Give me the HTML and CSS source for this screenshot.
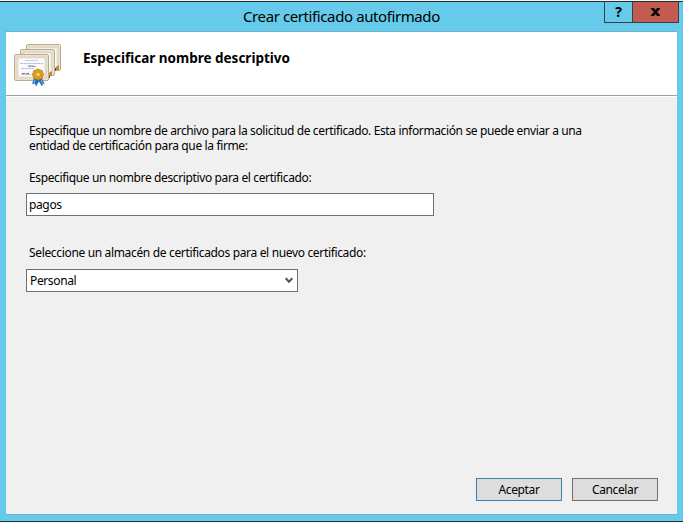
FILE: index.html
```html
<!DOCTYPE html>
<html lang="es">
<head>
<meta charset="utf-8">
<title>Crear certificado autofirmado</title>
<link rel="stylesheet" href="styles.css">
</head>
<body>
<div class="window">
  <header class="titlebar">
    <h1 class="title">Crear certificado autofirmado</h1>
    <div class="controls">
      <button class="control help" aria-label="Ayuda">?</button>
      <button class="control close" aria-label="Cerrar"><svg width="9" height="8" viewBox="0 0 9 8"><path d="M0 0h3l1.500 2L6 0h3v1L6 4l3 3v1H6L4.500 6 3 8H0V7l3-3-3-3z" fill="#080808"/></svg></button>
    </div>
  </header>
  <main class="client">
    <div class="banner">
      <svg class="certs" width="50" height="45" viewBox="0 0 50 45">
        <defs>
          <g id="cert">
            <rect x=".5" y=".5" width="34" height="26" rx="1.500" fill="#e5dac4" stroke="#b8ab94"/>
            <rect x="1.500" y="1.500" width="32" height="24" fill="none" stroke="#eee5d1" stroke-dasharray="2 1"/>
            <rect x="4" y="4" width="27" height="19" fill="#fafafc" stroke="#ded4c2" stroke-width=".7"/>
          </g>
        </defs>
        <use href="#cert" x="12" y="1"/>
        <path d="M42 24l3-2v5h-3z" fill="#c38c20"/><path d="M40 25h2v3h-2z" fill="#22599b"/>
        <use href="#cert" x="6" y="6"/>
        <path d="M35 30l3-2v5h-3z" fill="#c38c20"/><path d="M34 33h2v2h-2z" fill="#22599b"/>
        <use href="#cert" x="0" y="11"/>
        <path d="M11 17.500h13" stroke="#c8cde3"/>
        <path d="M6 20.500h23M14 22.500h7M7 25.500h13" stroke="#b9bfdd" stroke-dasharray="3 .5"/>
        <path d="M14 23.500h8" stroke="#9ba4d1"/>
        <path d="M8 30.500h8" stroke="#77777b" stroke-dasharray="3 1"/>
        <path d="M7 31.500h10" stroke="#c3c3c8"/>
        <path d="M20 35l-2 6 3-.5 1 3 3-5 3 5 1-3 2 1-3-6z" fill="#246fb9"/>
        <path d="M21 37l-1 3M27 37l2 4" stroke="#72b8ef"/>
        <path d="M24 26l2.200 1 2 .5.500 2 1.100 2-1.100 2-.5 2-2 .5-2.200 1-2.200-1-2-.5-.5-2-1.100-2 1.100-2 .5-2 2-.5z" fill="#dda01d" stroke="#b77c12" stroke-width=".8"/>
        <circle cx="24" cy="31.500" r="2.500" fill="#f3d067" stroke="#bd8416" stroke-width=".8"/>
      </svg>
      <h2 class="heading">Especificar nombre descriptivo</h2>
    </div>
    <form class="form">
      <p class="text">Especifique un nombre de archivo para la solicitud de certificado. Esta información se puede enviar a una</p>
      <p class="text">entidad de certificación para que la firme:</p>
      <p class="text name-label">Especifique un nombre descriptivo para el certificado:</p>
      <div class="field name-field">pagos</div>
      <p class="text store-label">Seleccione un almacén de certificados para el nuevo certificado:</p>
      <div class="field select"><span>Personal</span><svg width="8" height="7" viewBox="0 0 8 7"><path d="M.7 1.200L4 4.700l3.300-3.500" fill="none" stroke="#555" stroke-width="2"/></svg></div>
    </form>
    <footer class="actions">
      <button class="button primary">Aceptar</button>
      <button class="button">Cancelar</button>
    </footer>
  </main>
</div>
</body>
</html>
```
FILE: styles.css
```css
* { box-sizing: border-box; }
body { margin: 0; background: #edf5f7; font: 12px/15px "Noto Sans", sans-serif; letter-spacing: -.37px; color: #000; overflow: hidden; }
h1, h2, p { margin: 0; font-weight: 400; }
button { font: inherit; color: inherit; letter-spacing: inherit; padding: 0; border-radius: 0; }
.window { display: flex; flex-direction: column; width: 683px; height: 521px; margin-top: 1px; padding: 0 5px 6px 6px; border-top: 1px solid #292e31; border-bottom: 1px solid #292e31; background: #66caea; }
.titlebar { display: flex; height: 29px; }
.title { width: 598px; flex: none; padding: 4px 0 0 237px; font-size: 15px; line-height: 20px; letter-spacing: -.4px; white-space: nowrap; }
.controls { display: flex; height: 21px; border: solid #35404a; border-width: 0 1px 1px; width: 75px; flex: none; }
.control { display: flex; justify-content: center; align-items: center; border: 0; background: transparent; }
.help { width: 28px; padding-bottom: 1px; font-size: 14px; font-weight: 700; border-right: 1px solid #35404a; }
.close { flex: 1; background: #c45b51; }
.client { flex: 1; display: flex; flex-direction: column; width: 671px; border: solid #6fb1c9; border-width: 1px 0; background: #f0f0f0; }
.banner { display: flex; height: 64px; background: #fff; border-bottom: 1px solid #a0a0a0; box-shadow: 0 1px #fff; }
.certs { margin: 11px 0 0 8px; flex: none; }
.heading { margin: 18px 0 0 19px; font-size: 13.500px; line-height: 17px; font-weight: 700; letter-spacing: 0; white-space: nowrap; }
.form { padding: 27px 0 0 20px; }
.text { padding-left: 3px; white-space: nowrap; }
.name-label { margin-top: 17px; }
.field { display: flex; align-items: center; height: 23px; border: 1px solid #707070; background: #fff; }
.name-field { width: 408px; margin-top: 8px; padding-left: 2px; }
.store-label { margin-top: 29px; letter-spacing: -.34px; }
.select { justify-content: space-between; width: 272px; margin-top: 9px; padding: 0 4px 0 3px; }
.actions { display: flex; justify-content: flex-end; gap: 10px; margin: auto 19px 13px 0; }
.button { width: 86px; height: 23px; border: 1px solid #707070; background: #ddd; }
.primary { border-color: #3c7fb1; }
```
